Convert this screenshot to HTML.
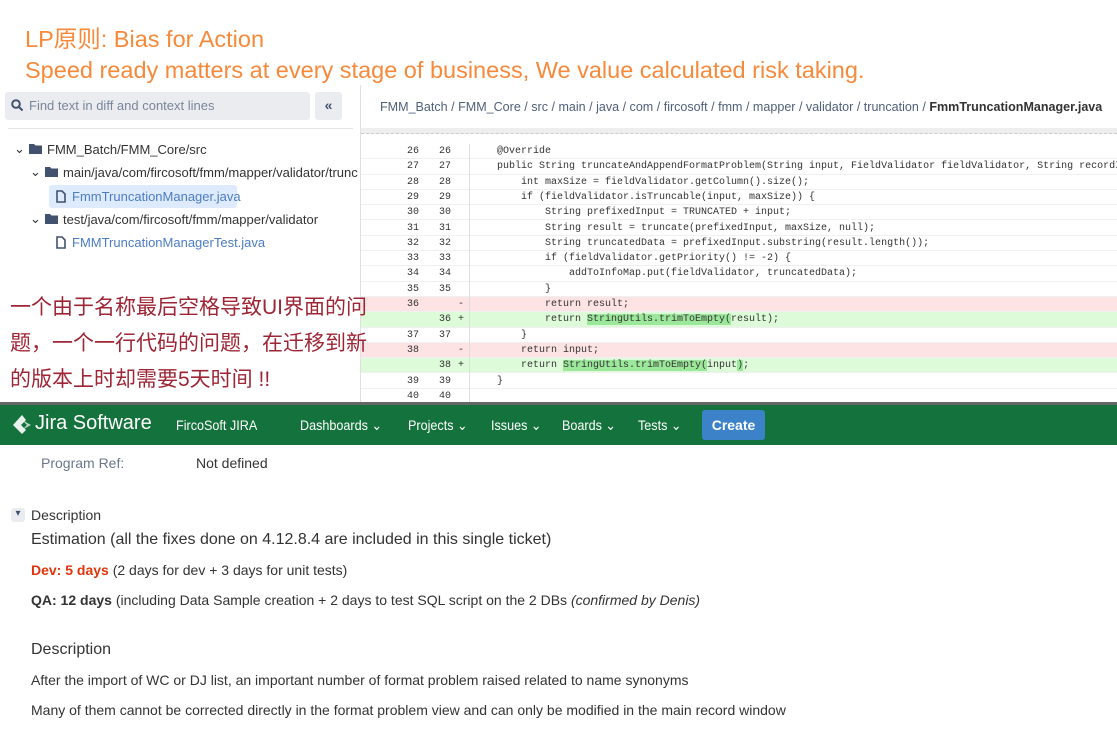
<!DOCTYPE html>
<html><head><meta charset="utf-8"><style>
*{margin:0;padding:0;box-sizing:border-box}
body{width:1117px;height:733px;overflow:hidden;background:#fff;font-family:"Liberation Sans","Noto Sans CJK SC",sans-serif;position:relative;color:#172b4d}
.abs{position:absolute;white-space:nowrap}
.t{color:#f7893a;font-size:23.5px;left:25px}
.code{font-family:"Liberation Mono",monospace;font-size:10px;color:#333}
.row{position:absolute;left:361px;width:756px;height:15.3px;line-height:15.3px;border-bottom:1px solid #f0f0f0}
.row .n1{position:absolute;left:38px;width:20px;text-align:right;color:#333}
.row .n2{position:absolute;left:70px;width:20px;text-align:right}
.row .s{position:absolute;left:97px}
.row .c{position:absolute;left:136px;white-space:pre}
.del{background:#fde3e3}.add{background:#ddfbd8}
.hl{background:#9be89b}
.tree{font-size:13px;color:#333}
.nav{color:#fff;font-size:14px}
.cz{display:inline-block;transform:scaleX(.9);transform-origin:left}
</style></head><body>
<div class="abs t" style="top:20px">LP原则: Bias for Action</div>
<div class="abs t" style="top:57px">Speed ready matters at every stage of business, We value calculated risk taking.</div>

<!-- left panel -->
<div class="abs" style="left:5px;top:92px;width:305px;height:28px;background:#ebecf0;border-radius:3px"></div>
<svg class="abs" style="left:11px;top:99px" width="13" height="13" viewBox="0 0 13 13"><circle cx="5" cy="5" r="3.8" stroke="#42526e" stroke-width="2" fill="none"/><path d="M8 8l3.5 3.5" stroke="#42526e" stroke-width="2"/></svg>
<div class="abs" style="left:29px;top:98px;font-size:13px;color:#7a869a">Find text in diff and context lines</div>
<div class="abs" style="left:315px;top:92px;width:27px;height:28px;background:#ebecf0;border-radius:3px;text-align:center;line-height:27px;font-size:14px;font-weight:bold;color:#42526e">«</div>
<div class="abs" style="left:8px;top:128px;width:345px;height:1px;background:#e5e5e5"></div>
<div class="abs" style="left:360px;top:85px;width:1px;height:320px;background:#e0e0e0"></div>

<div class="abs tree" style="left:14px;top:141px">⌄</div>
<svg class="abs" style="left:29px;top:143px" width="13" height="11"><path d="M0 1h5l1.5 1.5H13V11H0z" fill="#42526e"/></svg>
<div class="abs tree" style="left:47px;top:142px">FMM_Batch/FMM_Core/src</div>
<div class="abs tree" style="left:30px;top:164px">⌄</div>
<svg class="abs" style="left:45px;top:166px" width="13" height="11"><path d="M0 1h5l1.5 1.5H13V11H0z" fill="#42526e"/></svg>
<div class="abs tree" style="left:63px;top:165px">main/java/com/fircosoft/fmm/mapper/validator/trunc</div>
<div class="abs" style="left:49px;top:185px;width:188px;height:23px;background:#deebff;border-radius:3px"></div>
<svg class="abs" style="left:56px;top:190px" width="10" height="13"><path d="M1 1h5l3 3v8H1z" fill="none" stroke="#42526e" stroke-width="1.6"/></svg>
<div class="abs tree" style="left:72px;top:189px;color:#4c7cc4">FmmTruncationManager.java</div>
<div class="abs tree" style="left:30px;top:211px">⌄</div>
<svg class="abs" style="left:45px;top:213px" width="13" height="11"><path d="M0 1h5l1.5 1.5H13V11H0z" fill="#42526e"/></svg>
<div class="abs tree" style="left:63px;top:212px">test/java/com/fircosoft/fmm/mapper/validator</div>
<svg class="abs" style="left:56px;top:236px" width="10" height="13"><path d="M1 1h5l3 3v8H1z" fill="none" stroke="#42526e" stroke-width="1.6"/></svg>
<div class="abs tree" style="left:72px;top:235px;color:#4c7cc4">FMMTruncationManagerTest.java</div>

<!-- breadcrumb -->
<div class="abs" style="left:380px;top:99px;font-size:13px;color:#505f79"><span class="cz" style="transform:scaleX(.965)">FMM_Batch / FMM_Core / src / main / java / com / fircosoft / fmm / mapper / validator / truncation / <b style="color:#333">FmmTruncationManager.java</b></span></div>
<div class="abs" style="left:361px;top:128px;width:756px;height:6px;background:#eee;border-bottom:1px dashed #ccc"></div>

<div class="code">
<div class="row" style="top:144px"><span class="n1">26</span><span class="n2">26</span><span class="c">@Override</span></div>
<div class="row" style="top:159.3px"><span class="n1">27</span><span class="n2">27</span><span class="c">public String truncateAndAppendFormatProblem(String input, FieldValidator fieldValidator, String recordId</span></div>
<div class="row" style="top:174.6px"><span class="n1">28</span><span class="n2">28</span><span class="c">    int maxSize = fieldValidator.getColumn().size();</span></div>
<div class="row" style="top:189.9px"><span class="n1">29</span><span class="n2">29</span><span class="c">    if (fieldValidator.isTruncable(input, maxSize)) {</span></div>
<div class="row" style="top:205.2px"><span class="n1">30</span><span class="n2">30</span><span class="c">        String prefixedInput = TRUNCATED + input;</span></div>
<div class="row" style="top:220.5px"><span class="n1">31</span><span class="n2">31</span><span class="c">        String result = truncate(prefixedInput, maxSize, null);</span></div>
<div class="row" style="top:235.8px"><span class="n1">32</span><span class="n2">32</span><span class="c">        String truncatedData = prefixedInput.substring(result.length());</span></div>
<div class="row" style="top:251.1px"><span class="n1">33</span><span class="n2">33</span><span class="c">        if (fieldValidator.getPriority() != -2) {</span></div>
<div class="row" style="top:266.4px"><span class="n1">34</span><span class="n2">34</span><span class="c">            addToInfoMap.put(fieldValidator, truncatedData);</span></div>
<div class="row" style="top:281.7px"><span class="n1">35</span><span class="n2">35</span><span class="c">        }</span></div>
<div class="row del" style="top:297px"><span class="n1">36</span><span class="s">-</span><span class="c">        return result;</span></div>
<div class="row add" style="top:312.3px"><span class="n2">36</span><span class="s">+</span><span class="c">        return <span class="hl">StringUtils.trimToEmpty(</span>result);</span></div>
<div class="row" style="top:327.6px"><span class="n1">37</span><span class="n2">37</span><span class="c">    }</span></div>
<div class="row del" style="top:342.9px"><span class="n1">38</span><span class="s">-</span><span class="c">    return input;</span></div>
<div class="row add" style="top:358.2px"><span class="n2">38</span><span class="s">+</span><span class="c">    return <span class="hl">StringUtils.trimToEmpty(</span>input<span class="hl">)</span>;</span></div>
<div class="row" style="top:373.5px"><span class="n1">39</span><span class="n2">39</span><span class="c">}</span></div>
<div class="row" style="top:388.8px"><span class="n1">40</span><span class="n2">40</span><span class="c"></span></div>
</div>
<div class="abs" style="left:469px;top:144px;width:1px;height:260px;background:#ddd"></div>

<div class="abs" style="left:10px;top:290px;font-size:21px;line-height:36px;color:#9e2535;z-index:5">一个由于名称最后空格导致UI界面的问<br>题，一个一行代码的问题，在迁移到新<br>的版本上时却需要5天时间 !!</div>

<div class="abs" style="left:0;top:402px;width:1117px;height:3px;background:#666"></div>

<!-- jira bar -->
<div class="abs" style="left:0;top:405px;width:1117px;height:40px;background:#14733c"></div>
<svg class="abs" style="left:11px;top:414px" width="22" height="22" viewBox="0 0 22 22"><path d="M11 1L2 11l9 9 4-4-5-5 5-5z" fill="#fff" opacity=".9"/><path d="M11 6l5 5-5 5 9-5z" fill="#fff" opacity=".7"/></svg>
<div class="abs nav" style="left:35px;top:412px;font-size:20px">Jira Software</div>
<div class="abs nav" style="left:176px;top:417px"><span class="cz">FircoSoft JIRA</span></div>
<div class="abs nav" style="left:300px;top:417px"><span class="cz">Dashboards ⌄</span></div>
<div class="abs nav" style="left:408px;top:417px"><span class="cz">Projects ⌄</span></div>
<div class="abs nav" style="left:491px;top:417px"><span class="cz">Issues ⌄</span></div>
<div class="abs nav" style="left:562px;top:417px"><span class="cz">Boards ⌄</span></div>
<div class="abs nav" style="left:638px;top:417px"><span class="cz">Tests ⌄</span></div>
<div class="abs" style="left:702px;top:410px;width:63px;height:30px;background:#3b82c9;border-radius:3px;color:#fff;font-weight:bold;font-size:14px;text-align:center;line-height:30px">Create</div>

<!-- issue -->
<div class="abs" style="left:41px;top:455px;font-size:14px;color:#6b778c">Program Ref:</div>
<div class="abs" style="left:196px;top:455px;font-size:14px;color:#333">Not defined</div>
<div class="abs" style="left:11px;top:508px;width:14px;height:14px;background:#ebecf0;border-radius:3px;font-size:10px;text-align:center;line-height:12px;color:#42526e">▾</div>
<div class="abs" style="left:31px;top:507px;font-size:14px;color:#333">Description</div>
<div class="abs" style="left:31px;top:531px;font-size:16px;color:#333">Estimation (all the fixes done on 4.12.8.4 are included in this single ticket)</div>
<div class="abs" style="left:31px;top:562px;font-size:14px;color:#333"><b style="color:#de350b">Dev: 5 days</b> (2 days for dev + 3 days for unit tests)</div>
<div class="abs" style="left:31px;top:592px;font-size:14px;color:#333"><b>QA: 12 days</b> (including Data Sample creation + 2 days to test SQL script on the 2 DBs <i>(confirmed by Denis)</i></div>
<div class="abs" style="left:31px;top:641px;font-size:16px;color:#333">Description</div>
<div class="abs" style="left:31px;top:672px;font-size:14px;color:#333">After the import of WC or DJ list, an important number of format problem raised related to name synonyms</div>
<div class="abs" style="left:31px;top:702px;font-size:14px;color:#333">Many of them cannot be corrected directly in the format problem view and can only be modified in the main record window</div>
</body></html>
